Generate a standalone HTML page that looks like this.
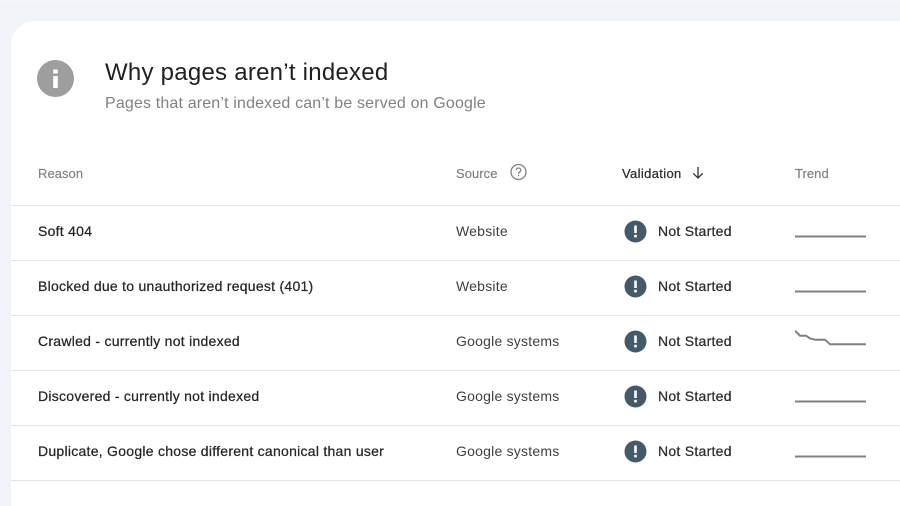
<!DOCTYPE html>
<html>
<head>
<meta charset="utf-8">
<style>
html,body{margin:0;padding:0;width:900px;height:506px;overflow:hidden;background:#f0f4f9;font-family:"Liberation Sans",sans-serif;}
.band{position:absolute;left:0;top:0;width:900px;height:5px;background:#f2f6fc;}
.card{position:absolute;left:11px;top:21px;width:889px;height:485px;background:#fff;border-radius:24px 0 0 0;}
.t{position:absolute;white-space:nowrap;line-height:20px;}
.line{position:absolute;left:11px;width:889px;height:1px;background:#e2e3e5;}
.r{font-size:14px;color:#23262a;-webkit-text-stroke:.25px #23262a;left:38px;letter-spacing:.265px;}
.s{font-size:14px;color:#3c4043;left:456px;letter-spacing:.22px;}
.n{font-size:14px;color:#2a2d31;-webkit-text-stroke:.25px #2a2d31;left:658px;letter-spacing:.27px;}
.h{font-size:13px;color:#7d7f82;-webkit-text-stroke:.15px #7d7f82;letter-spacing:.05px;}
svg{position:absolute;}
</style>
</head>
<body>
<div class="band"></div>
<div class="card"></div>

<svg style="left:37px;top:60px" width="37" height="37" viewBox="0 0 37 37">
<circle cx="18.5" cy="18.5" r="18.5" fill="#9e9e9e"/>
<rect x="16.2" y="9.5" width="4.6" height="4" fill="#fff"/>
<rect x="16.2" y="16" width="4.6" height="12" fill="#fff"/>
</svg>

<div class="t" style="left:105px;top:58px;font-size:24px;line-height:30px;color:#202124;letter-spacing:.25px;">Why pages aren’t indexed</div>
<div class="t" style="left:105px;top:94px;font-size:16px;color:#7f8184;letter-spacing:.16px;">Pages that aren’t indexed can’t be served on Google</div>

<div class="t h" style="left:38px;top:164px;">Reason</div>
<div class="t h" style="left:456px;top:164px;">Source</div>
<svg style="left:510px;top:164px" width="17" height="17" viewBox="0 0 17 17">
<circle cx="8.5" cy="8" r="7.5" fill="none" stroke="#7d7f82" stroke-width="1.3"/>
<path d="M6.2 6.3a2.3 2.3 0 0 1 4.6 0c0 1.6-2.3 1.7-2.3 3.4" fill="none" stroke="#7d7f82" stroke-width="1.3"/>
<rect x="7.8" y="10.8" width="1.4" height="1.4" fill="#7d7f82"/>
</svg>
<div class="t" style="left:622px;top:164px;font-size:13px;color:#2a2d31;-webkit-text-stroke:.25px #2a2d31;letter-spacing:.35px;">Validation</div>
<svg style="left:691px;top:166px" width="14" height="14" viewBox="0 0 14 14">
<path d="M7 1v11M2.2 7.3 7 12l4.8-4.7" fill="none" stroke="#303438" stroke-width="1.3"/>
</svg>
<div class="t h" style="left:795px;top:164px;">Trend</div>

<div class="line" style="top:205px"></div>
<div class="line" style="top:260px"></div>
<div class="line" style="top:315px"></div>
<div class="line" style="top:370px"></div>
<div class="line" style="top:425px"></div>
<div class="line" style="top:480px"></div>

<div class="t r" style="top:221px">Soft 404</div>
<div class="t s" style="top:221px">Website</div>
<div class="t n" style="top:221px">Not Started</div>
<svg style="left:624px;top:220px" width="23" height="23" viewBox="0 0 23 23"><circle cx="11.5" cy="11.5" r="11" fill="#455a68"/><rect x="10.2" y="5.5" width="2.6" height="7.5" fill="#fff"/><rect x="10.2" y="14.8" width="2.6" height="2.6" fill="#fff"/></svg>
<svg style="left:795px;top:230px" width="71" height="10"><path d="M0 6.5H71" stroke="#808080" stroke-width="2" fill="none"/></svg>

<div class="t r" style="top:276px">Blocked due to unauthorized request (401)</div>
<div class="t s" style="top:276px">Website</div>
<div class="t n" style="top:276px">Not Started</div>
<svg style="left:624px;top:275px" width="23" height="23" viewBox="0 0 23 23"><circle cx="11.5" cy="11.5" r="11" fill="#455a68"/><rect x="10.2" y="5.5" width="2.6" height="7.5" fill="#fff"/><rect x="10.2" y="14.8" width="2.6" height="2.6" fill="#fff"/></svg>
<svg style="left:795px;top:285px" width="71" height="10"><path d="M0 6.5H71" stroke="#808080" stroke-width="2" fill="none"/></svg>

<div class="t r" style="top:331px">Crawled - currently not indexed</div>
<div class="t s" style="top:331px">Google systems</div>
<div class="t n" style="top:331px">Not Started</div>
<svg style="left:624px;top:330px" width="23" height="23" viewBox="0 0 23 23"><circle cx="11.5" cy="11.5" r="11" fill="#455a68"/><rect x="10.2" y="5.5" width="2.6" height="7.5" fill="#fff"/><rect x="10.2" y="14.8" width="2.6" height="2.6" fill="#fff"/></svg>
<svg style="left:795px;top:325px" width="71" height="25"><path d="M0 5.7 L5 10.7 H11 L15 13.3 L20 14.7 H30 L35 19.3 H71" stroke="#808080" stroke-width="2" fill="none"/></svg>

<div class="t r" style="top:386px">Discovered - currently not indexed</div>
<div class="t s" style="top:386px">Google systems</div>
<div class="t n" style="top:386px">Not Started</div>
<svg style="left:624px;top:385px" width="23" height="23" viewBox="0 0 23 23"><circle cx="11.5" cy="11.5" r="11" fill="#455a68"/><rect x="10.2" y="5.5" width="2.6" height="7.5" fill="#fff"/><rect x="10.2" y="14.8" width="2.6" height="2.6" fill="#fff"/></svg>
<svg style="left:795px;top:395px" width="71" height="10"><path d="M0 6.5H71" stroke="#808080" stroke-width="2" fill="none"/></svg>

<div class="t r" style="top:441px">Duplicate, Google chose different canonical than user</div>
<div class="t s" style="top:441px">Google systems</div>
<div class="t n" style="top:441px">Not Started</div>
<svg style="left:624px;top:440px" width="23" height="23" viewBox="0 0 23 23"><circle cx="11.5" cy="11.5" r="11" fill="#455a68"/><rect x="10.2" y="5.5" width="2.6" height="7.5" fill="#fff"/><rect x="10.2" y="14.8" width="2.6" height="2.6" fill="#fff"/></svg>
<svg style="left:795px;top:450px" width="71" height="10"><path d="M0 6.5H71" stroke="#808080" stroke-width="2" fill="none"/></svg>
</body>
</html>
